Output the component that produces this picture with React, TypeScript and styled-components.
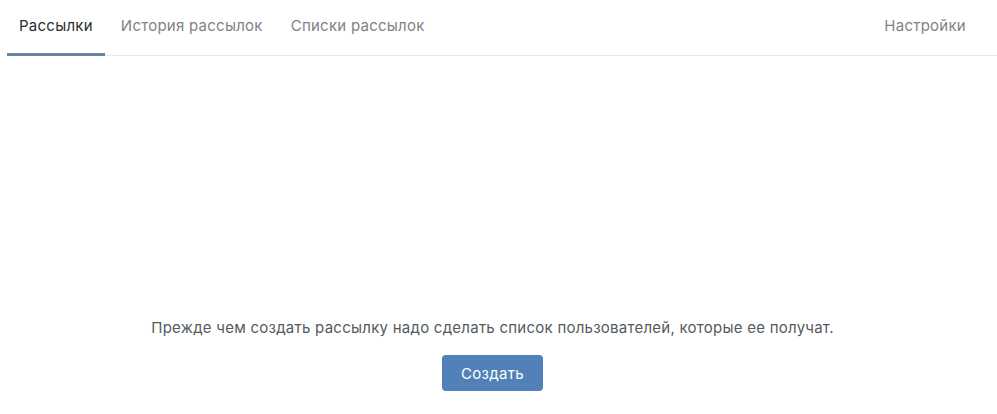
import { createGlobalStyle, styled } from "styled-components";

const GlobalStyle = createGlobalStyle`
  html, body {
    margin: 0;
    padding: 0;
    background: #ffffff;
    font-family: Inter, Roboto, sans-serif;
  }
`;

const tabs = ["Рассылки", "История рассылок", "Списки рассылок"];

function App() {
  return (
    <Page>
      <GlobalStyle />
      <Header>
        <TabList>
          {tabs.map((t, i) => (
            <Tab key={t} active={i === 0}>
              {t}
            </Tab>
          ))}
        </TabList>
        <Tab active={false}>Настройки</Tab>
      </Header>
      <Content>
        <Message>
          Прежде чем создать рассылку надо сделать список пользователей, которые ее получат.
        </Message>
        <Button>Создать</Button>
      </Content>
    </Page>
  );
}

const Page = styled.div`
  width: 997px;
  height: 414px;
  padding-left: 7px;
  box-sizing: border-box;
`;

const Header = styled.div`
  height: 55px;
  display: flex;
  justify-content: space-between;
  align-items: stretch;
  padding-right: 19px;
  border-bottom: 1px solid #e7e8ec;
`;

const TabList = styled.div`
  display: flex;
  gap: 4px;
`;

const Tab = styled.div<{ active: boolean }>`
  display: flex;
  align-items: center;
  padding: 0 12px 3px;
  margin-bottom: -1px;
  font-size: 15px;
  letter-spacing: 0.25px;
  color: ${(p) => (p.active ? "#2c2d2e" : "#828282")};
  border-bottom: 3px solid ${(p) => (p.active ? "#6a84a0" : "transparent")};
  box-sizing: border-box;
  cursor: pointer;
`;

const Content = styled.div`
  display: flex;
  flex-direction: column;
  align-items: center;
  padding-top: 262px;
  margin-right: 19px;
`;

const Message = styled.div`
  font-size: 15px;
  letter-spacing: 0.25px;
  color: #555a60;
  line-height: 20px;
`;

const Button = styled.button`
  margin-top: 17px;
  width: 101px;
  height: 36px;
  border: none;
  border-radius: 4px;
  background: #5181b8;
  color: #ffffff;
  font-family: Inter, Roboto, sans-serif;
  font-size: 15px;
  letter-spacing: 0.3px;
  cursor: pointer;
`;

export default App;
